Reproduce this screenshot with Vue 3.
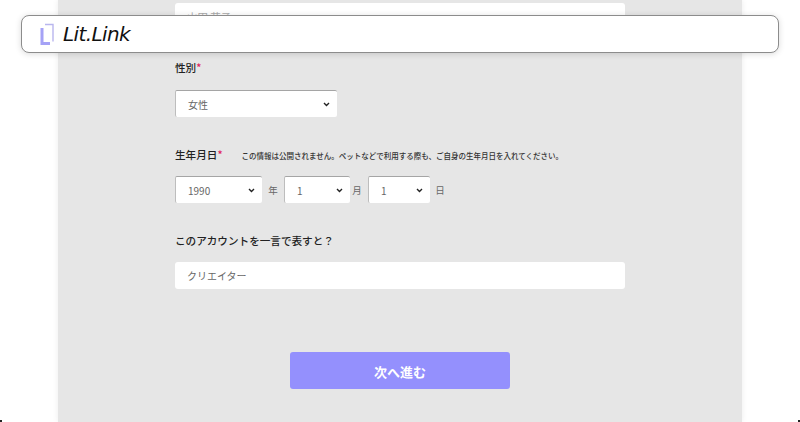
<script setup>
const birthParts = [
  { key: "year", value: "1990", unit: "年" },
  { key: "month", value: "1", unit: "月" },
  { key: "day", value: "1", unit: "日" },
];
</script>

<template>
  <div class="screen">
    <header class="topbar">
      <svg class="logo-mark" width="14" height="22" viewBox="0 0 14 22">
        <path d="M5 1.5h8v17" fill="none" stroke="#b9b6ee" stroke-width="1.4" />
        <path d="M2 5v15.5h8" fill="none" stroke="#a5a2f6" stroke-width="3" />
      </svg>
      <span class="logo-text">Lit.Link</span>
    </header>

    <main class="page">
      <form class="form" @submit.prevent>
        <div class="name-input">山田 花子</div>

        <label class="label gender-label">性別<span class="req">*</span></label>
        <div class="select gender-select">
          <span>女性</span>
          <svg class="chev" width="7" height="5" viewBox="0 0 7 5"><path d="M1 1l2.5 2.5L6 1" fill="none" stroke="#222" stroke-width="1.4" /></svg>
        </div>

        <div class="birth-head">
          <label class="label">生年月日<span class="req">*</span></label>
          <span class="note">この情報は公開されません。ペットなどで利用する際も、ご自身の生年月日を入れてください。</span>
        </div>
        <div class="birth-row">
          <template v-for="part in birthParts" :key="part.key">
            <div class="select" :class="part.key">
              <span>{{ part.value }}</span>
              <svg class="chev" width="7" height="5" viewBox="0 0 7 5"><path d="M1 1l2.5 2.5L6 1" fill="none" stroke="#222" stroke-width="1.4" /></svg>
            </div>
            <span class="unit" :class="'unit-' + part.key">{{ part.unit }}</span>
          </template>
        </div>

        <label class="label word-label">このアカウントを一言で表すと？</label>
        <div class="word-input">クリエイター</div>

        <button class="next" type="button">次へ進む</button>
      </form>
    </main>

    <i class="corner left"></i>
    <i class="corner right"></i>
  </div>
</template>

<style>
html,
body {
  margin: 0;
  background: #fff;
}
</style>

<style scoped>
.screen {
  position: relative;
  width: 800px;
  height: 422px;
  overflow: hidden;
  background: #fff;
  font-family: "Noto Sans CJK JP", "Noto Sans", sans-serif;
  color: #222;
}
.topbar {
  position: absolute;
  left: 21px;
  top: 15px;
  width: 758px;
  height: 38px;
  box-sizing: border-box;
  display: flex;
  align-items: center;
  gap: 9px;
  padding: 0 18px;
  background: #fff;
  border: 1px solid #8c8c8c;
  border-radius: 8px;
  box-shadow: 0 1px 6px rgba(0, 0, 0, 0.15);
}
.logo-text {
  font-family: "DejaVu Sans", sans-serif;
  font-style: italic;
  font-size: 20px;
  letter-spacing: -0.6px;
  color: #111;
}
.page {
  width: 684px;
  height: 422px;
  margin: 0 auto;
  background: #e6e6e6;
  box-shadow: 0 0 6px rgba(0, 0, 0, 0.08);
}
.form {
  width: 450px;
  margin: 0 auto;
  padding-top: 3px;
  display: flex;
  flex-direction: column;
}
.name-input {
  height: 27px;
  box-sizing: border-box;
  padding: 6px 12px 0;
  background: #fff;
  border-radius: 3px;
  font-size: 10.5px;
  color: #aaa;
}
.label {
  font-size: 10.6px;
  font-weight: 500;
  line-height: 16px;
  color: #222;
}
.req {
  color: #e0245e;
}
.gender-label {
  margin-top: 30px;
}
.select {
  display: flex;
  align-items: center;
  justify-content: space-between;
  flex: none;
  height: 27px;
  box-sizing: border-box;
  padding: 0 7px 0 12px;
  background: #fff;
  border-top: 1px solid #a5a5a5;
  border-left: 1px solid #bdbdbd;
  border-radius: 2px;
  font-size: 10px;
  color: #666;
}
.gender-select {
  width: 162px;
  margin-top: 14px;
}
.birth-head {
  display: flex;
  align-items: center;
  gap: 19px;
  margin-top: 30px;
}
.note {
  font-size: 7.5px;
  font-weight: 500;
  white-space: nowrap;
  color: #333;
}
.birth-row {
  display: flex;
  align-items: center;
  margin-top: 13px;
}
.year {
  width: 87px;
}
.month {
  width: 66px;
}
.day {
  width: 62px;
}
.unit {
  flex: none;
  text-align: center;
  font-size: 9.5px;
  color: #666;
}
.unit-year {
  width: 22px;
}
.unit-month {
  width: 18px;
  padding-right: 4px;
  box-sizing: border-box;
}
.unit-day {
  width: 20px;
}
.word-label {
  margin-top: 30px;
}
.word-input {
  height: 27px;
  margin-top: 13px;
  box-sizing: border-box;
  padding: 0 12px;
  display: flex;
  align-items: center;
  background: #fff;
  border-radius: 3px;
  font-size: 10px;
  color: #666;
}
.next {
  align-self: center;
  width: 220px;
  height: 37px;
  margin-top: 63px;
  padding-top: 2px;
  border: 0;
  border-radius: 3px;
  background: #9490fd;
  color: #fff;
  font-family: inherit;
  font-size: 13px;
  font-weight: 700;
}
.corner {
  position: absolute;
  bottom: 0;
  width: 2px;
  height: 2px;
  background: #222;
}
.corner.left {
  left: 0;
}
.corner.right {
  right: 0;
}
</style>
